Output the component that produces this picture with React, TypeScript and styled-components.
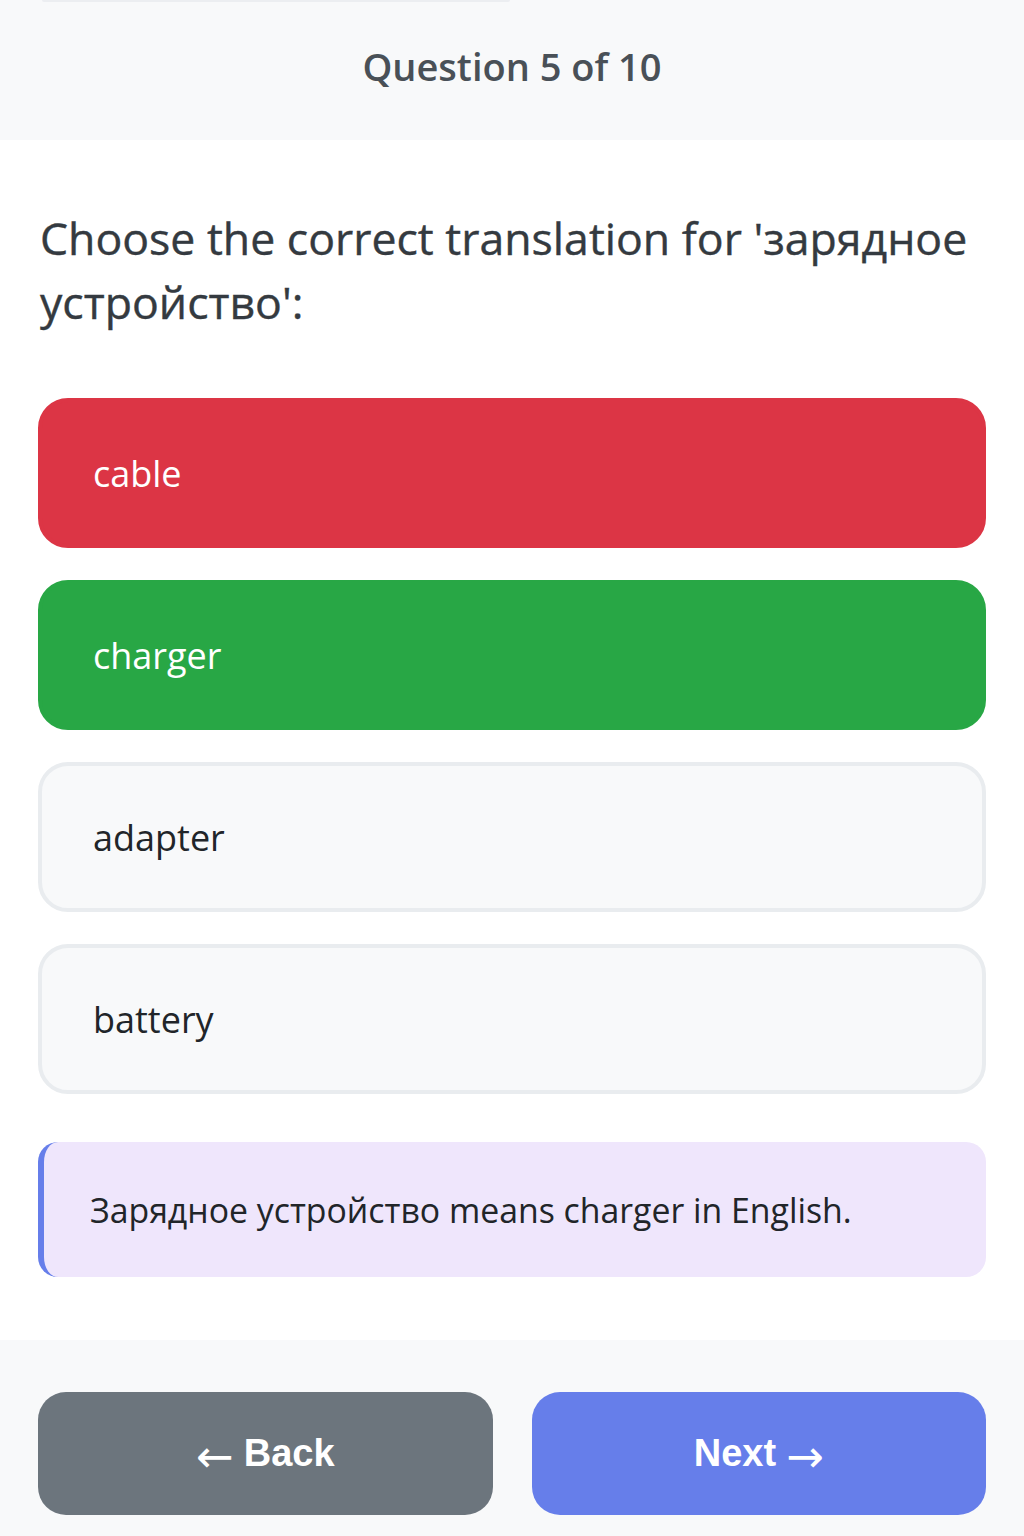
import React from "react";
import styled, { createGlobalStyle } from "styled-components";

const Global = createGlobalStyle`
  html, body { margin: 0; padding: 0; background: #ffffff; }
  body { font-family: "Open Sans", "Noto Sans", sans-serif; }
  * { box-sizing: border-box; }
`;

const Page = styled.div`
  width: 1024px;
  min-height: 1536px;
  display: flex;
  flex-direction: column;
  background: #ffffff;
`;

const Header = styled.header`
  background: #f8f9fa;
  height: 140px;
  display: flex;
  flex-direction: column;
`;

const TopTrace = styled.div`
  margin-left: 42px;
  width: 468px;
  height: 2px;
  background: #eceef1;
  border-radius: 0 0 2px 2px;
`;

const Counter = styled.div`
  flex: 1;
  display: flex;
  align-items: center;
  justify-content: center;
  padding-bottom: 10px;
  font-size: 38px;
  font-weight: 600;
  color: #495057;
`;

const Main = styled.main`
  padding: 66px 38px 63px 38px;
  display: flex;
  flex-direction: column;
`;

const Question = styled.h2`
  margin: 0 0 64px 2px;
  font-size: 44.6px;
  line-height: 64px;
  font-weight: 500;
  color: #343a40;
  -webkit-text-stroke: 0.4px #343a40;
`;

const Options = styled.div`
  display: flex;
  flex-direction: column;
  gap: 32px;
`;

type Tone = "wrong" | "right" | "plain";

const toneBg: Record<Tone, string> = {
  wrong: "#dc3545",
  right: "#28a745",
  plain: "#f8f9fa",
};
const toneBorder: Record<Tone, string> = {
  wrong: "#dc3545",
  right: "#28a745",
  plain: "#e9ecef",
};

const Option = styled.button<{ $tone: Tone }>`
  height: 150px;
  width: 100%;
  display: flex;
  align-items: center;
  padding: 0 0 0 51px;
  border-radius: 30px;
  border: 4px solid ${(p) => toneBorder[p.$tone]};
  background: ${(p) => toneBg[p.$tone]};
  color: ${(p) => (p.$tone === "plain" ? "#212529" : "#ffffff")};
  font-family: inherit;
  font-size: 36px;
  text-align: left;
`;

const Explanation = styled.div`
  margin-top: 48px;
  height: 135px;
  display: flex;
  align-items: center;
  padding-left: 46px;
  background: #efe6fc;
  border-left: 6px solid #667eea;
  border-radius: 20px;
  font-size: 33.8px;
  color: #212529;
`;

const Footer = styled.footer`
  flex: 1;
  background: #f8f9fa;
  padding: 52px 38px 0 38px;
  display: flex;
  gap: 39px;
  align-items: flex-start;
`;

const NavButton = styled.button<{ $primary?: boolean }>`
  flex: 1;
  height: 123px;
  border: none;
  border-radius: 28px;
  background: ${(p) => (p.$primary ? "#667eea" : "#6c757d")};
  color: #ffffff;
  font-family: "Liberation Sans", Arial, sans-serif;
  font-weight: 700;
  font-size: 38px;
  display: flex;
  align-items: center;
  justify-content: center;
  gap: 10px;
`;

const Arrow = styled.span`
  font-family: "DejaVu Sans", sans-serif;
  font-weight: 400;
  font-size: 45px;
  line-height: 1;
  position: relative;
  top: 3px;
`;

const options: { label: string; tone: Tone }[] = [
  { label: "cable", tone: "wrong" },
  { label: "charger", tone: "right" },
  { label: "adapter", tone: "plain" },
  { label: "battery", tone: "plain" },
];

export default function App() {
  return (
    <Page>
      <Global />
      <Header>
        <TopTrace />
        <Counter>Question 5 of 10</Counter>
      </Header>
      <Main>
        <Question>Choose the correct translation for 'зарядное устройство':</Question>
        <Options>
          {options.map((o) => (
            <Option key={o.label} $tone={o.tone}>
              {o.label}
            </Option>
          ))}
        </Options>
        <Explanation>Зарядное устройство means charger in English.</Explanation>
      </Main>
      <Footer>
        <NavButton>
          <Arrow>←</Arrow>
          <span>Back</span>
        </NavButton>
        <NavButton $primary>
          <span>Next</span>
          <Arrow>→</Arrow>
        </NavButton>
      </Footer>
    </Page>
  );
}
